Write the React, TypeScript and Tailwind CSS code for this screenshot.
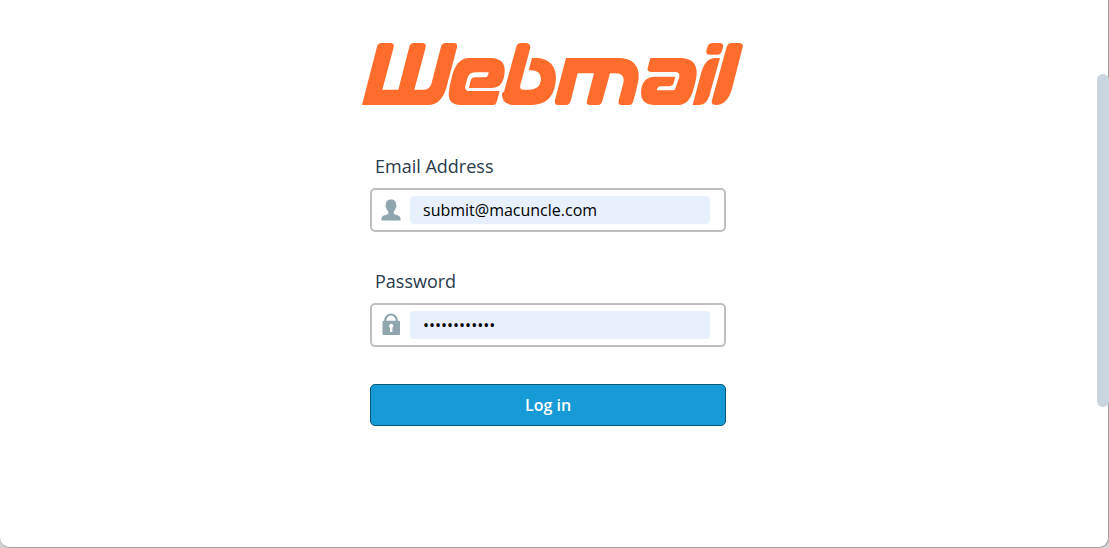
import type { ReactNode } from "react";

function WebmailLogo() {
  return (
    <svg role="img" aria-label="Webmail" viewBox="21 24 1143 186" className="h-[62px] w-[381px]" fill="#ff6c2c">
      <path d="M21 210 66 35Q69 24 80 24H106Q119 24 116 37L82 164H130L163 35Q166 24 177 24H201Q215 24 212 37L178 164H206Q224 164 229 147L258 35Q261 24 272 24H296Q309 24 306 37L275 155Q260 210 218 210Z" />
      <path d="M342 69H408Q449 70 449 106Q449 128 441 142Q432 159 410 159H342L346 140Q349 127 361 127H390Q400 127 401 112H360Q342 112 337 130L331 153Q328 167 341 168H434L425 201Q422 210 414 210H313Q281 209 281 178Q282 160 291 124Q304 70 342 69Z" />
      <path d="M484 35Q487 24 498 24H512Q529 25 525 42L496 150Q493 164 505 164H525Q556 163 558 133Q558 107 530 106H521L531 69H547Q601 73 603 129Q600 207 532 210H474Q440 208 441 177Q442 170 447 170Z" />
      <path transform="translate(585 0)" d="M48 69H210Q266 72 266 125Q266 140 250 198Q247 210 237 210H215Q203 210 206 197L220 144Q226 115 195 115H180L157 198Q154 210 143 210H120Q108 210 111 197L132 115H83L62 198Q58 210 48 210H24Q12 210 15 195Z" />
      <path transform="translate(585 0)" d="M301 69H395Q441 72 440 115Q440 130 432 157Q420 210 385 210H310Q273 208 273 172Q275 125 316 125H376L372 141Q369 154 355 154H333Q322 154 320 166H367Q375 166 377 158L388 126Q390 111 376 111H306Q290 111 293 99Z" />
      <path transform="translate(585 0)" d="M488 24H510Q521 25 519 36L516 47Q513 59 502 59H480Q467 59 469 47L473 34Q477 24 488 24ZM494 69H510L478 182Q470 209 446 210H428L455 108Q466 70 494 69Z" />
      <path transform="translate(585 0)" d="M545 24H568Q581 25 578 37L546 161Q532 209 498 210Q482 210 486 195L530 36Q534 24 545 24Z" />
    </svg>
  );
}

function UserIcon() {
  return (
    <svg aria-hidden="true" viewBox="0 0 20 22" className="h-[22px] w-5" fill="#90a6ae">
      <path d="M10 .5c3.300 0 5.200 2 5.200 5.400 0 .5.500.7.300 1.700-.2 1-.7 1.200-.9 2-.4 1.500-1.200 2.400-1.900 3.100v2.100c1.600 1 4.300 1.200 5.700 2.400 1 .9 1.200 2.500 1.200 4.300H.4c0-1.800.2-3.400 1.200-4.300 1.400-1.200 4.100-1.400 5.700-2.400v-2.100c-.7-.7-1.500-1.600-1.900-3.100-.2-.8-.7-1-.9-2-.2-1 .3-1.200.3-1.700C4.800 2.500 6.700.5 10 .5Z" />
    </svg>
  );
}

function LockIcon() {
  return (
    <svg aria-hidden="true" viewBox="0 0 20 24" className="h-6 w-5">
      <path d="M4.300 9V7.200a5.700 5.700 0 0 1 11.400 0V9" fill="none" stroke="#90a6ae" strokeWidth="2.200" />
      <rect x="1.500" y="7.700" width="17.500" height="14.300" rx="1" fill="#90a6ae" />
      <path d="M10.200 10.800a2.200 2.200 0 0 1 1.200 4v4.200H9v-4.200a2.200 2.200 0 0 1 1.200-4Z" fill="#fff" />
    </svg>
  );
}

type FieldProps = { id: string; label: string; type: string; value: string; icon: ReactNode };

function Field({ id, label, type, value, icon }: FieldProps) {
  return (
    <div>
      <label htmlFor={id} className="ml-[5px] block text-lg leading-6 font-medium text-[#293a4a]">
        {label}
      </label>
      <div className="mt-[10px] flex h-11 items-center gap-[9px] rounded-[5px] border-2 border-[#bebebe] pr-3.5 pl-[9px]">
        {icon}
        <input
          id={id}
          type={type}
          defaultValue={value}
          className="h-7 min-w-0 flex-1 rounded bg-[#e8f0fe] px-[13px] text-base text-black outline-none"
        />
      </div>
    </div>
  );
}

export default function App() {
  return (
    <div className="h-screen bg-[#d2d2d2] font-['Open_Sans','Noto_Sans',sans-serif]">
      <div className="flex h-full justify-center overflow-hidden rounded-b-[10px] border-r border-b border-[#a0a0a0] bg-white">
        <main className="flex flex-col items-center pt-[43px] pr-3">
          <div className="pl-2">
            <WebmailLogo />
          </div>
          <form className="mt-[49px] flex w-[356px] flex-col" onSubmit={(e) => e.preventDefault()}>
            <div className="flex flex-col gap-[37px]">
              <Field id="email" label="Email Address" type="email" value="submit@macuncle.com" icon={<UserIcon />} />
              <Field id="password" label="Password" type="password" value="macuncle1234" icon={<LockIcon />} />
            </div>
            <button
              type="submit"
              className="mt-[37px] h-[42px] rounded-[5px] border border-[#095779] bg-[#179bd7] text-base font-semibold text-white"
            >
              Log in
            </button>
          </form>
        </main>
      </div>
      <div aria-hidden="true" className="absolute top-[74px] right-0 h-[333px] w-3 rounded-full bg-[#c8d5df]" />
    </div>
  );
}
